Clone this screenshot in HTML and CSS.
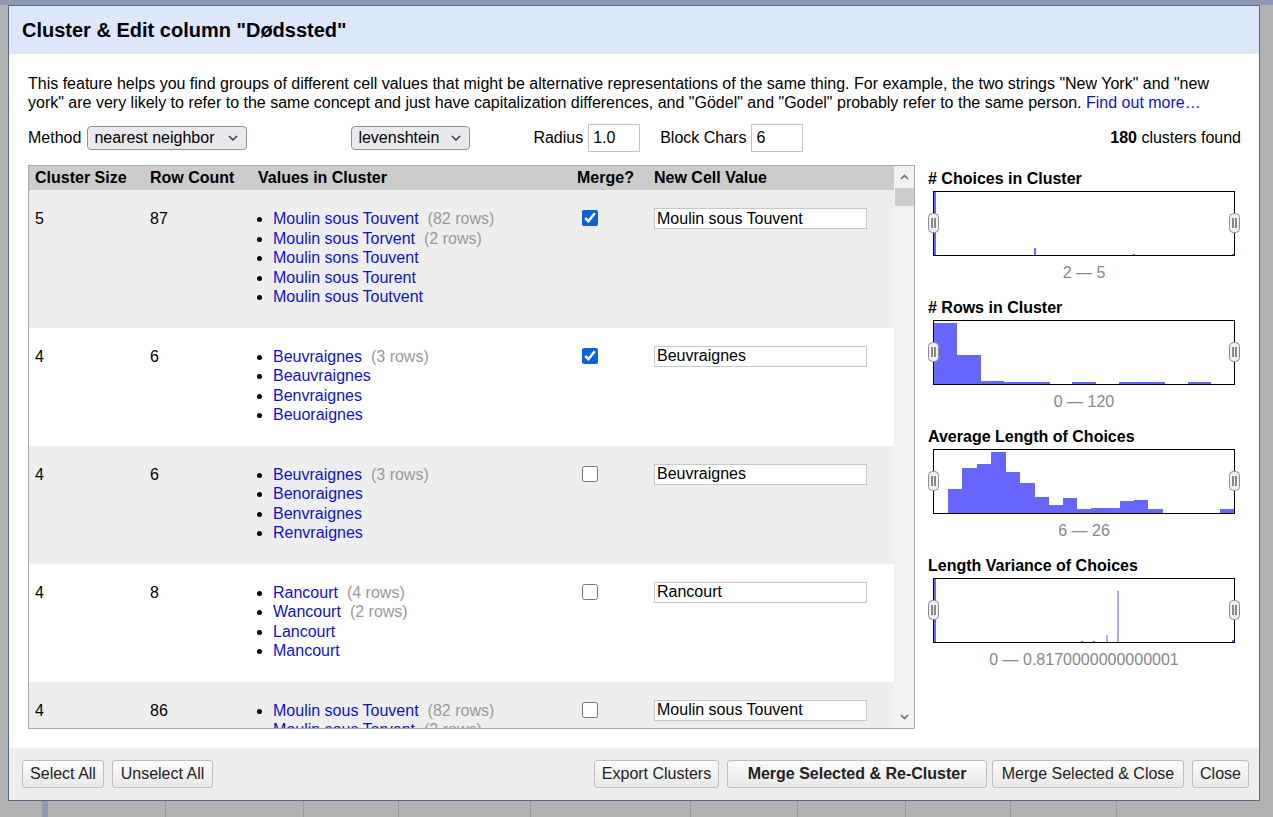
FILE: index.html
```html
<!DOCTYPE html>
<html lang="en">
<head>
<meta charset="utf-8">
<title>Cluster &amp; Edit</title>
<link rel="stylesheet" href="styles.css">
</head>
<body>
<div class="topbar"></div>
<div class="dialog">
  <div class="dlg-header">Cluster &amp; Edit column "Dødssted"</div>
  <div class="dlg-body">
    <p class="desc">This feature helps you find groups of different cell values that might be alternative representations of the same thing. For example, the two strings "New York" and "new york" are very likely to refer to the same concept and just have capitalization differences, and "Gödel" and "Godel" probably refer to the same person. <a class="link" href="#">Find out more…</a></p>
    <div class="controls">
      <span class="lbl">Method</span>
      <div class="select sel-method"><span>nearest neighbor</span><svg class="chev" width="10" height="6" viewBox="0 0 10 6"><path d="M1 1 L5 5 L9 1" /></svg></div>
      <div class="select sel-func"><span>levenshtein</span><svg class="chev" width="10" height="6" viewBox="0 0 10 6"><path d="M1 1 L5 5 L9 1" /></svg></div>
      <span class="lbl lbl-radius">Radius</span>
      <input class="num" type="text" value="1.0">
      <span class="lbl lbl-block">Block Chars</span>
      <input class="num" type="text" value="6">
      <span class="found"><b>180</b> clusters found</span>
    </div>
    <div class="main">
      <div class="table-wrap">
        <div class="table-clip">
          <table class="clusters">
            <colgroup><col class="c1"><col class="c2"><col class="c3"><col class="c4"><col class="c5"></colgroup>
            <thead>
              <tr><th>Cluster Size</th><th>Row Count</th><th>Values in Cluster</th><th>Merge?</th><th>New Cell Value</th></tr>
            </thead>
            <tbody>
              <tr class="odd">
                <td>5</td><td>87</td>
                <td><ul class="vals">
                  <li><a class="link" href="#">Moulin sous Touvent</a><span class="cnt">(82 rows)</span></li>
                  <li><a class="link" href="#">Moulin sous Torvent</a><span class="cnt">(2 rows)</span></li>
                  <li><a class="link" href="#">Moulin sons Touvent</a></li>
                  <li><a class="link" href="#">Moulin sous Tourent</a></li>
                  <li><a class="link" href="#">Moulin sous Toutvent</a></li>
                </ul></td>
                <td><input class="chk" type="checkbox" checked></td>
                <td><input class="newval" type="text" value="Moulin sous Touvent"></td>
              </tr>
              <tr>
                <td>4</td><td>6</td>
                <td><ul class="vals">
                  <li><a class="link" href="#">Beuvraignes</a><span class="cnt">(3 rows)</span></li>
                  <li><a class="link" href="#">Beauvraignes</a></li>
                  <li><a class="link" href="#">Benvraignes</a></li>
                  <li><a class="link" href="#">Beuoraignes</a></li>
                </ul></td>
                <td><input class="chk" type="checkbox" checked></td>
                <td><input class="newval" type="text" value="Beuvraignes"></td>
              </tr>
              <tr class="odd">
                <td>4</td><td>6</td>
                <td><ul class="vals">
                  <li><a class="link" href="#">Beuvraignes</a><span class="cnt">(3 rows)</span></li>
                  <li><a class="link" href="#">Benoraignes</a></li>
                  <li><a class="link" href="#">Benvraignes</a></li>
                  <li><a class="link" href="#">Renvraignes</a></li>
                </ul></td>
                <td><input class="chk" type="checkbox"></td>
                <td><input class="newval" type="text" value="Beuvraignes"></td>
              </tr>
              <tr>
                <td>4</td><td>8</td>
                <td><ul class="vals">
                  <li><a class="link" href="#">Rancourt</a><span class="cnt">(4 rows)</span></li>
                  <li><a class="link" href="#">Wancourt</a><span class="cnt">(2 rows)</span></li>
                  <li><a class="link" href="#">Lancourt</a></li>
                  <li><a class="link" href="#">Mancourt</a></li>
                </ul></td>
                <td><input class="chk" type="checkbox"></td>
                <td><input class="newval" type="text" value="Rancourt"></td>
              </tr>
              <tr class="odd">
                <td>4</td><td>86</td>
                <td><ul class="vals">
                  <li><a class="link" href="#">Moulin sous Touvent</a><span class="cnt">(82 rows)</span></li>
                  <li><a class="link" href="#">Moulin sous Torvent</a><span class="cnt">(2 rows)</span></li>
                  <li><a class="link" href="#">Moulin sons Touvent</a></li>
                  <li><a class="link" href="#">Moulin sous Tourent</a></li>
                </ul></td>
                <td><input class="chk" type="checkbox"></td>
                <td><input class="newval" type="text" value="Moulin sous Touvent"></td>
              </tr>
            </tbody>
          </table>
        </div>
        <div class="vscroll">
          <div class="sb-btn"><svg width="9" height="6" viewBox="0 0 9 6"><path d="M1 5 L4.5 1.5 L8 5" /></svg></div>
          <div class="sb-thumb"></div>
          <div class="sb-track"></div>
          <div class="sb-btn"><svg width="9" height="6" viewBox="0 0 9 6"><path d="M1 1 L4.5 4.5 L8 1" /></svg></div>
        </div>
      </div>
      <div class="hists">
        <div class="hist">
          <div class="hist-title"># Choices in Cluster</div>
          <div class="chart">
            <svg class="bars" viewBox="0 0 300 63" width="300" height="63">
              <rect x="0" y="0" width="2" height="63"/>
              <rect x="100" y="56" width="2" height="7"/>
              <rect x="199" y="62" width="2" height="1"/>
              <rect x="298" y="62" width="2" height="1"/>
            </svg>
            <svg class="handle h-left" width="11" height="20" viewBox="0 0 11 20"><rect x="0.5" y="0.5" width="10" height="19" rx="4"/><path d="M4 5 V15 M7 5 V15"/></svg>
            <svg class="handle h-right" width="11" height="20" viewBox="0 0 11 20"><rect x="0.5" y="0.5" width="10" height="19" rx="4"/><path d="M4 5 V15 M7 5 V15"/></svg>
          </div>
          <div class="range">2 — 5</div>
        </div>
        <div class="hist">
          <div class="hist-title"># Rows in Cluster</div>
          <div class="chart">
            <svg class="bars" viewBox="0 0 300 63" width="300" height="63">
              <rect x="0" y="2" width="23" height="61"/>
              <rect x="23" y="34" width="24" height="29"/>
              <rect x="47" y="60" width="23" height="3"/>
              <rect x="70" y="61" width="46" height="2"/>
              <rect x="138" y="61" width="24" height="2"/>
              <rect x="185" y="61" width="46" height="2"/>
              <rect x="254" y="61" width="23" height="2"/>
            </svg>
            <svg class="handle h-left" width="11" height="20" viewBox="0 0 11 20"><rect x="0.5" y="0.5" width="10" height="19" rx="4"/><path d="M4 5 V15 M7 5 V15"/></svg>
            <svg class="handle h-right" width="11" height="20" viewBox="0 0 11 20"><rect x="0.5" y="0.5" width="10" height="19" rx="4"/><path d="M4 5 V15 M7 5 V15"/></svg>
          </div>
          <div class="range">0 — 120</div>
        </div>
        <div class="hist">
          <div class="hist-title">Average Length of Choices</div>
          <div class="chart">
            <svg class="bars" viewBox="0 0 300 63" width="300" height="63">
              <rect x="14" y="39" width="14" height="24"/>
              <rect x="28" y="18" width="15" height="45"/>
              <rect x="43" y="14" width="14" height="49"/>
              <rect x="57" y="2" width="15" height="61"/>
              <rect x="72" y="22" width="14" height="41"/>
              <rect x="86" y="33" width="15" height="30"/>
              <rect x="101" y="47" width="14" height="16"/>
              <rect x="115" y="55" width="14" height="8"/>
              <rect x="129" y="48" width="14" height="15"/>
              <rect x="143" y="59" width="14" height="4"/>
              <rect x="157" y="58" width="15" height="5"/>
              <rect x="172" y="58" width="14" height="5"/>
              <rect x="186" y="51" width="14" height="12"/>
              <rect x="200" y="50" width="14" height="13"/>
              <rect x="214" y="59" width="15" height="4"/>
              <rect x="286" y="59" width="14" height="4"/>
            </svg>
            <svg class="handle h-left" width="11" height="20" viewBox="0 0 11 20"><rect x="0.5" y="0.5" width="10" height="19" rx="4"/><path d="M4 5 V15 M7 5 V15"/></svg>
            <svg class="handle h-right" width="11" height="20" viewBox="0 0 11 20"><rect x="0.5" y="0.5" width="10" height="19" rx="4"/><path d="M4 5 V15 M7 5 V15"/></svg>
          </div>
          <div class="range">6 — 26</div>
        </div>
        <div class="hist">
          <div class="hist-title">Length Variance of Choices</div>
          <div class="chart">
            <svg class="bars" viewBox="0 0 300 63" width="300" height="63">
              <rect x="0" y="0" width="2" height="63"/>
              <rect x="183" y="12" width="2" height="51" class="light"/>
              <rect x="172" y="56" width="2" height="7" class="light"/>
              <rect x="147" y="62" width="2" height="1"/>
              <rect x="159" y="62" width="2" height="1"/>
              <rect x="298" y="61" width="2" height="2"/>
            </svg>
            <svg class="handle h-left" width="11" height="20" viewBox="0 0 11 20"><rect x="0.5" y="0.5" width="10" height="19" rx="4"/><path d="M4 5 V15 M7 5 V15"/></svg>
            <svg class="handle h-right" width="11" height="20" viewBox="0 0 11 20"><rect x="0.5" y="0.5" width="10" height="19" rx="4"/><path d="M4 5 V15 M7 5 V15"/></svg>
          </div>
          <div class="range">0 — 0.8170000000000001</div>
        </div>
      </div>
    </div>
  </div>
  <div class="dlg-footer">
    <div class="f-left">
      <button class="btn b-sel">Select All</button>
      <button class="btn b-unsel">Unselect All</button>
    </div>
    <div class="f-right">
      <button class="btn b-export">Export Clusters</button>
      <button class="btn btn-strong">Merge Selected &amp; Re-Cluster</button>
      <button class="btn b-mclose">Merge Selected &amp; Close</button>
      <button class="btn b-close">Close</button>
    </div>
  </div>
</div>
<div class="under">
  <span class="u u1"></span><span class="u u2"></span><span class="u u3"></span><span class="u u4"></span><span class="u u5"></span><span class="u u6"></span><span class="u u7"></span><span class="u u8"></span><span class="u u9"></span><span class="u u10"></span>
</div>
</body>
</html>
```

FILE: styles.css
```css
html, body {
  margin: 0;
  padding: 0;
}
body {
  width: 1273px;
  height: 817px;
  overflow: hidden;
  background: #b1b1b1;
  font-family: "Liberation Sans", Arial, sans-serif;
  font-size: 16px;
  color: #000;
}
.topbar {
  height: 5px;
  background: #8e99b1;
}
.dialog {
  margin-left: 8px;
  width: 1252px;
  height: 796px;
  box-sizing: border-box;
  border: 1px solid #56698a;
  background: #fff;
  display: flex;
  flex-direction: column;
}
.dlg-header {
  height: 48px;
  flex: none;
  background: #dce8fa;
  display: flex;
  align-items: center;
  padding-left: 13px;
  font-weight: bold;
  font-size: 20px;
}
.dlg-body {
  flex: 1;
  padding: 20px 18px 0 19px;
}
.desc {
  margin: 0;
  line-height: 19px;
}
.link {
  color: #1111cc;
  text-decoration: none;
}
.controls {
  display: flex;
  align-items: center;
  height: 28px;
  margin-top: 12px;
}
.select {
  display: flex;
  align-items: center;
  justify-content: space-between;
  height: 24px;
  box-sizing: border-box;
  border: 1px solid #8f8f9d;
  border-radius: 4px;
  background: #e9e9ed;
  padding: 0 8px 0 6px;
}
.chev path {
  fill: none;
  stroke: #333;
  stroke-width: 1.4;
}
.sel-method {
  width: 160px;
  margin-left: 6px;
}
.sel-func {
  width: 119px;
  margin-left: 104px;
}
.lbl-radius {
  margin-left: 63px;
}
.lbl-block {
  margin-left: 20px;
}
.num {
  width: 52px;
  height: 28px;
  box-sizing: border-box;
  margin-left: 5px;
  border: 1px solid #c4c4c4;
  padding: 0 4px;
  font: inherit;
  color: #000;
  outline: none;
}
.found {
  margin-left: auto;
}
.main {
  display: flex;
  margin-top: 13px;
  gap: 14px;
}
.table-wrap {
  width: 887px;
  height: 564px;
  box-sizing: border-box;
  border: 1px solid #aaa;
  display: flex;
}
.table-clip {
  flex: 1;
  overflow: hidden;
}
.clusters {
  width: 100%;
  border-collapse: collapse;
  table-layout: fixed;
}
.c1 { width: 115px; }
.c2 { width: 108px; }
.c3 { width: 319px; }
.c4 { width: 77px; }
.clusters th {
  background: #cccccc;
  height: 24px;
  line-height: 24px;
  padding: 0 6px;
  text-align: left;
  font-weight: bold;
  white-space: nowrap;
}
.clusters td {
  vertical-align: top;
  padding: 19px 6px 21px;
  line-height: 19.5px;
}
.clusters tr.odd td {
  background: #eeeeee;
}
.vals {
  margin: 0;
  padding-left: 15px;
}
.cnt {
  color: #999;
  margin-left: 9px;
}
.chk {
  display: block;
  width: 16px;
  height: 16px;
  margin: 1px 0 0 5px;
  accent-color: #0b62d8;
}
.newval {
  display: block;
  width: 213px;
  height: 21px;
  box-sizing: border-box;
  margin-top: -1px;
  border: 1px solid #c8c8c8;
  padding: 0 2px;
  font: inherit;
  color: #000;
  background: #fff;
  outline: none;
}
.vscroll {
  width: 20px;
  flex: none;
  background: #f1f1f1;
  display: flex;
  flex-direction: column;
}
.sb-btn {
  height: 22px;
  display: flex;
  align-items: center;
  justify-content: center;
}
.sb-btn path {
  fill: none;
  stroke: #6a6a6a;
  stroke-width: 1.6;
}
.sb-thumb {
  height: 18px;
  margin: 0 0 0 1px;
  background: #cdcdcd;
}
.sb-track {
  flex: 1;
}
.hists {
  width: 312px;
  padding-top: 4px;
  margin-left: -1px;
}
.hist + .hist {
  margin-top: 16px;
}
.hist-title {
  font-weight: bold;
  line-height: 19px;
}
.chart {
  position: relative;
  margin: 3px 0 0 5px;
  width: 302px;
  height: 65px;
  box-sizing: border-box;
  border: 1px solid #000;
}
.bars {
  display: block;
}
.bars rect {
  fill: #6666ff;
}
.bars rect.light {
  fill: #a9a9ff;
}
.handle {
  position: absolute;
  top: 21px;
}
.handle rect {
  fill: #f2f2f2;
  stroke: #8a8a8a;
}
.handle path {
  fill: none;
  stroke: #444;
  stroke-width: 1.2;
}
.h-left {
  left: -6px;
}
.h-right {
  right: -6px;
}
.range {
  margin: 7px 0 0 5px;
  width: 302px;
  text-align: center;
  color: #888;
  line-height: 19px;
}
.dlg-footer {
  height: 52px;
  flex: none;
  box-sizing: border-box;
  background: #eeeeee;
  padding: 12px 10px 0 13px;
  display: flex;
  justify-content: space-between;
  align-items: flex-start;
}
.f-left, .f-right {
  display: flex;
  gap: 8px;
}
.btn {
  height: 28px;
  box-sizing: border-box;
  padding: 0;
  text-align: center;
  border: 1px solid #bdbdbd;
  border-radius: 3px;
  background: linear-gradient(#fbfbfb, #e8e8e8);
  font: inherit;
  color: #222;
  white-space: nowrap;
}
.b-sel { width: 82px; }
.b-unsel { width: 101px; }
.b-export { width: 125px; }
.btn-strong {
  width: 260px;
  font-weight: bold;
  margin-right: -3px;
}
.b-mclose { width: 192px; }
.b-close { width: 57px; }
.under {
  display: flex;
  height: 16px;
}
.u {
  border-right: 1px solid #9a9a9a;
  box-sizing: border-box;
}
.u1 { width: 48px; border-right: 6px solid #8f9ab3; }
.u2 { width: 118px; }
.u3 { width: 138px; }
.u4 { width: 95px; }
.u5 { width: 132px; }
.u6 { width: 160px; }
.u7 { width: 107px; }
.u8 { width: 108px; }
.u9 { width: 105px; }
.u10 { width: 106px; }
```
